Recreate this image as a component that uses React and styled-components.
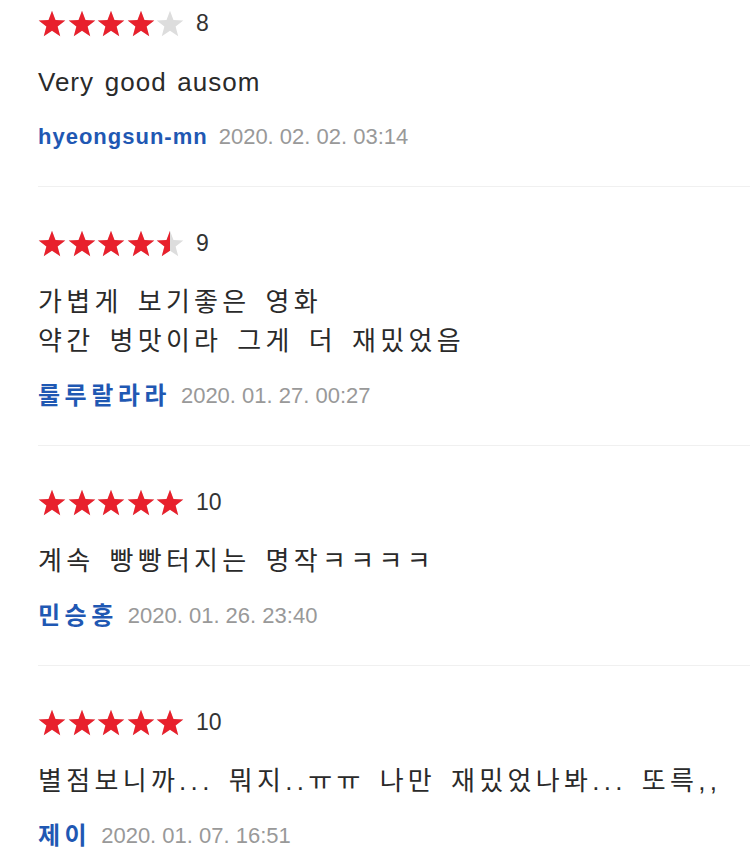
import styled, { createGlobalStyle } from "styled-components";

const GlobalStyle = createGlobalStyle`
  body {
    margin: 0;
    background: #fff;
    font-family: "Liberation Sans", "Noto Sans CJK KR", sans-serif;
    color: #333;
  }
`;

const List = styled.ul`
  list-style: none;
  margin: 0;
  padding: 0 0 0 38px;
  overflow: hidden;
`;

const Item = styled.li`
  padding: ${(p) => (p.$first ? "10px" : "43px")} 0 34px;
  border-bottom: 1px solid #f0f0f0;
`;

const RatingRow = styled.div`
  display: flex;
  align-items: center;
  height: 27px;
`;

const Stars = styled.div`
  display: flex;
  gap: 1.5px;
`;

const StarBox = styled.span`
  position: relative;
  display: block;
  width: 28px;
  height: 27px;
  svg {
    display: block;
    width: 28px;
    height: 27px;
  }
`;

const StarFill = styled.span`
  position: absolute;
  left: 0;
  top: 0;
  height: 100%;
  overflow: hidden;
`;

const Score = styled.span`
  margin-left: 12px;
  font-size: 23px;
  line-height: 27px;
  color: #333;
`;

const Text = styled.p`
  margin: 26px 0 0;
  font-size: 26px;
  line-height: 39px;
  letter-spacing: ${(p) => (p.$latin ? "1px" : "4.3px")};
  word-spacing: ${(p) => (p.$latin ? "2.5px" : "3.5px")};
  color: #2a2a2a;
  white-space: pre-wrap;
`;

const Meta = styled.div`
  display: flex;
  align-items: center;
  height: 30px;
  margin-top: 20px;
`;

const Author = styled.span`
  font-weight: 700;
  font-size: ${(p) => (p.$latin ? "22px" : "24px")};
  letter-spacing: ${(p) => (p.$latin ? "1px" : "4.5px")};
  line-height: 30px;
  color: #1f58b3;
  margin-right: ${(p) => (p.$latin ? "11px" : "10px")};
`;

const Date = styled.span`
  font-size: 22px;
  line-height: 30px;
  color: #999;
`;

const STAR_PATH =
  "M14 0.8L17.47 10.03L27.31 10.47L19.61 16.62L22.23 26.13L14 20.7L5.77 26.13L8.39 16.62L0.69 10.47L10.53 10.03Z";

function Star({ fill }) {
  return (
    <StarBox>
      <svg viewBox="0 0 28 27">
        <path d={STAR_PATH} fill="#dddddd" />
      </svg>
      {fill > 0 && (
        <StarFill style={{ width: `${fill * 100}%` }}>
          <svg viewBox="0 0 28 27">
            <path d={STAR_PATH} fill="#e8202c" />
          </svg>
        </StarFill>
      )}
    </StarBox>
  );
}

const reviews = [
  {
    score: 8,
    text: "Very good ausom",
    author: "hyeongsun-mn",
    date: "2020. 02. 02. 03:14",
  },
  {
    score: 9,
    text: "가볍게 보기좋은 영화\n약간 병맛이라 그게 더 재밌었음",
    author: "룰루랄라라",
    date: "2020. 01. 27. 00:27",
  },
  {
    score: 10,
    text: "계속 빵빵터지는 명작ㅋㅋㅋㅋ",
    author: "민승홍",
    date: "2020. 01. 26. 23:40",
  },
  {
    score: 10,
    text: "별점보니까... 뭐지..ㅠㅠ 나만 재밌었나봐... 또륵,,",
    author: "제이",
    date: "2020. 01. 07. 16:51",
  },
];

const isLatin = (s) => !/[\u3131-\uD79D]/.test(s);

const App = () => (
  <>
    <GlobalStyle />
    <List>
      {reviews.map((r, i) => (
        <Item key={i} $first={i === 0}>
          <RatingRow>
            <Stars>
              {[0, 1, 2, 3, 4].map((n) => (
                <Star key={n} fill={Math.max(0, Math.min(1, r.score / 2 - n))} />
              ))}
            </Stars>
            <Score>{r.score}</Score>
          </RatingRow>
          <Text $latin={isLatin(r.text)}>{r.text}</Text>
          <Meta>
            <Author $latin={isLatin(r.author)}>{r.author}</Author>
            <Date>{r.date}</Date>
          </Meta>
        </Item>
      ))}
    </List>
  </>
);

export default App;
